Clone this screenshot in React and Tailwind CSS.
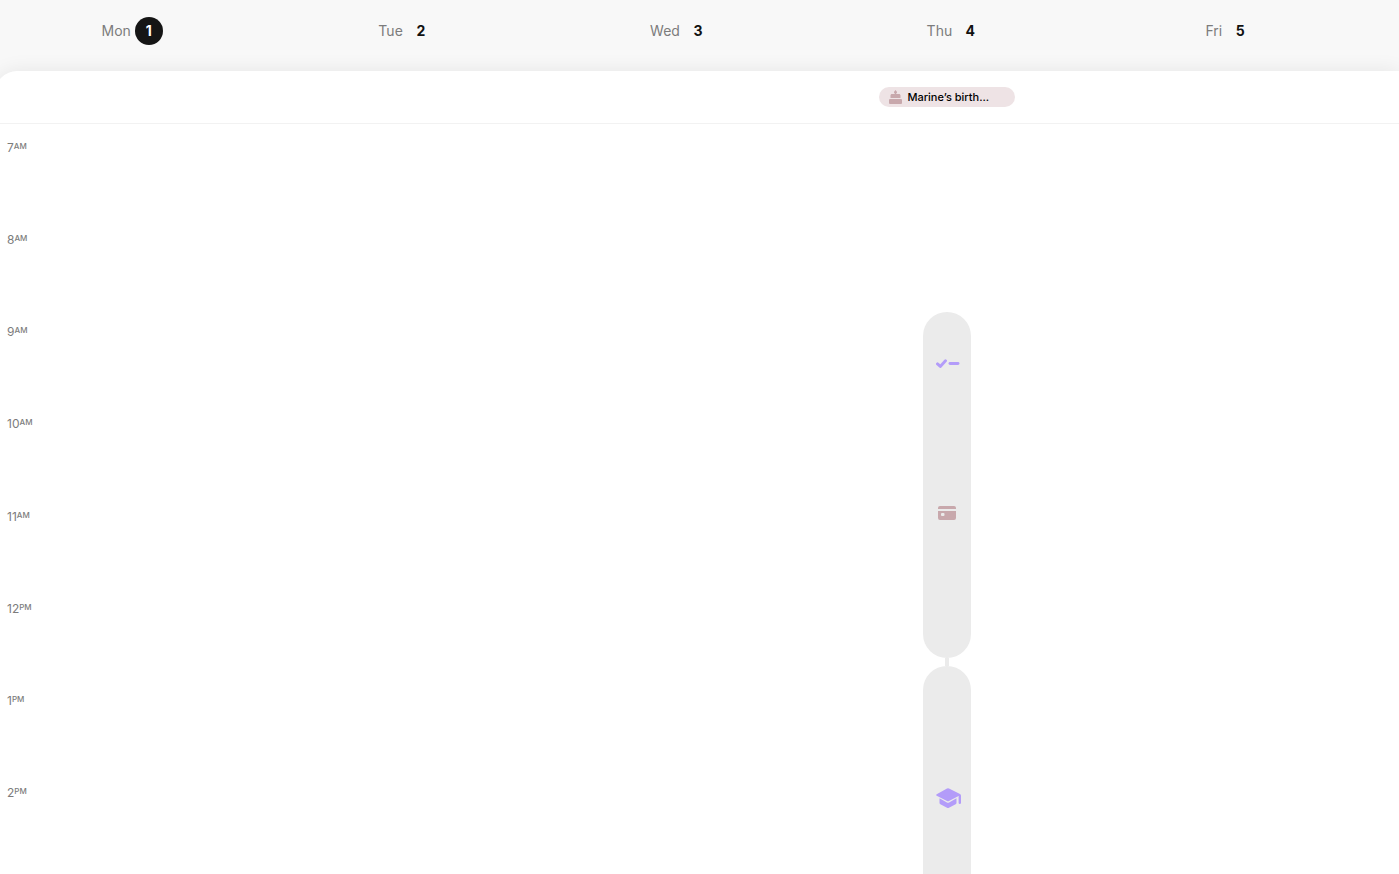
const days = [
  { name: 'Mon', date: 1, current: true },
  { name: 'Tue', date: 2 },
  { name: 'Wed', date: 3 },
  { name: 'Thu', date: 4 },
  { name: 'Fri', date: 5 },
];

const hours = [
  ['7', 'AM'],
  ['8', 'AM'],
  ['9', 'AM'],
  ['10', 'AM'],
  ['11', 'AM'],
  ['12', 'PM'],
  ['1', 'PM'],
  ['2', 'PM'],
];

function CakeIcon() {
  return (
    <svg width="13" height="14" viewBox="0 0 13 14" fill="#c8a8ac" aria-hidden="true">
      <path d="M6.5 0C7.3 1 8 1.6 8 2.4c0 .6-.4 1-.9 1.200V4H10c.9 0 1.500.7 1.500 1.500V8h-10V5.500C1.500 4.700 2.100 4 3 4h2.900v-.4C5.400 3.400 5 3 5 2.400 5 1.600 5.700 1 6.500 0z" />
      <rect x="0" y="9" width="13" height="5" rx="1" />
    </svg>
  );
}

function ChecklistIcon() {
  return (
    <svg width="24" height="9" viewBox="0 0 24 9" fill="none" stroke="#b39cf9" strokeLinecap="round" strokeLinejoin="round" aria-hidden="true">
      <path d="M1.500 4.900L4.300 7.400L9.500 1.700" strokeWidth="2.900" />
      <path d="M14 4.500H22" strokeWidth="2.900" />
    </svg>
  );
}

function CardIcon() {
  return (
    <svg width="18" height="14" viewBox="0 0 18 14" fill="#c8a8ac" aria-hidden="true">
      <path d="M2 0H16a2 2 0 0 1 2 2V3H0V2A2 2 0 0 1 2 0z" />
      <path fillRule="evenodd" d="M0 5H18V12a2 2 0 0 1-2 2H2a2 2 0 0 1-2-2zM4 7a1 1 0 0 0-1 1v1a1 1 0 0 0 1 1h1.500a1 1 0 0 0 1-1V8a1 1 0 0 0-1-1z" />
    </svg>
  );
}

function SchoolIcon() {
  return (
    <svg width="25" height="20" viewBox="0 0 25 20" fill="#b39cf9" aria-hidden="true">
      <path d="M11 .4Q12 -.1 13 .4L24 6.100Q25 6.700 25 7.700V14.800Q25 16 23.800 16T22.600 14.800V8L13 13.100Q12 13.600 11 13.100L.7 7.700Q-.5 7 .7 6.200z" />
      <path d="M3.500 10.300L10.900 14.400Q12 14.900 13.100 14.400L20.500 10.300V14.800Q20.500 15.800 19.600 16.300L13 19.700Q12 20.200 11 19.700L4.400 16.300Q3.500 15.800 3.500 14.800z" />
    </svg>
  );
}

export default function App() {
  return (
    <div className="flex h-screen flex-col overflow-hidden bg-[#f8f8f8] font-['Inter',sans-serif] text-[#111111]">
      <header className="-ml-[5px] mr-8 grid h-[71px] shrink-0 grid-cols-5 pt-[17px]">
        {days.map((day) => (
          <div key={day.name} className="flex h-7 items-center justify-center gap-1 text-sm">
            <span className="text-[#7c7c7c]">{day.name}</span>
            <span
              className={
                day.current
                  ? 'flex size-7 items-center justify-center rounded-full bg-[#151515] font-bold text-white'
                  : 'flex size-7 items-center justify-center font-bold'
              }
            >
              {day.date}
            </span>
          </div>
        ))}
      </header>

      <main className="-ml-[5px] flex min-h-0 flex-1 flex-col rounded-tl-[22px] bg-white shadow-[0_0_20px_rgba(0,0,0,0.08)]">
        <section aria-label="All day" className="h-[53px] shrink-0 border-b border-[#f2f2f2] pr-8">
          <div className="grid grid-cols-5 pt-4">
            <div className="col-start-4 flex justify-center pr-4">
              <div className="flex h-5 w-[136px] items-center gap-[5px] rounded-full bg-[#eee3e5] pl-[10px]">
                <CakeIcon />
                <span className="text-[11px] font-medium leading-5 text-black">Marine’s birth...</span>
              </div>
            </div>
          </div>
        </section>

        <section aria-label="Schedule" className="grid min-h-0 flex-1 overflow-hidden">
          <ol className="col-start-1 row-start-1 mt-[15px] grid h-[737px] grid-rows-8 pl-3 text-xs text-[#7c7c7c]">
            {hours.map(([hour, period]) => (
              <li key={hour} className="flex items-start leading-[18px]">
                <span>{hour}</span>
                <span className="text-[8px] font-medium leading-[14px]">{period}</span>
              </li>
            ))}
          </ol>
          <div className="col-start-1 row-start-1 mr-8 grid grid-cols-5">
            <div className="col-start-4 flex flex-col items-center pr-4 pt-[188px]">
              <div className="flex h-[346px] w-12 shrink-0 flex-col items-center rounded-full bg-[#ebebeb] pt-[47px]">
                <div className="pl-px">
                  <ChecklistIcon />
                </div>
                <div className="pt-[138px]">
                  <CardIcon />
                </div>
              </div>
              <div className="h-2 w-1 shrink-0 bg-[#ebebeb]" />
              <div className="flex h-[280px] w-12 shrink-0 flex-col items-center rounded-full bg-[#ebebeb] pl-[2px] pt-[122px]">
                <SchoolIcon />
              </div>
            </div>
          </div>
        </section>
      </main>
    </div>
  );
}
